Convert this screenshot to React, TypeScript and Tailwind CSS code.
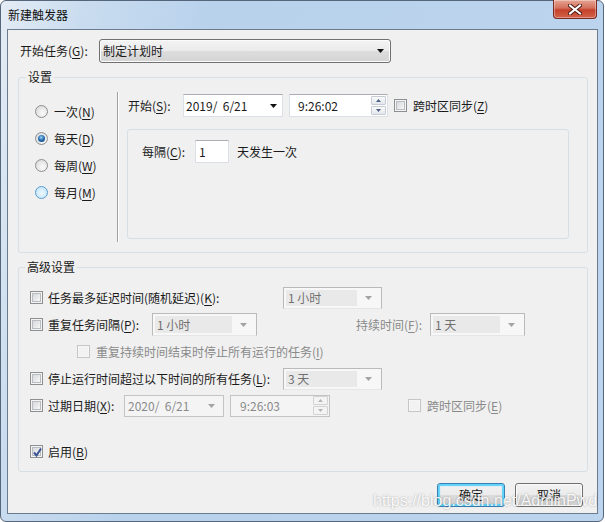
import React from "react";

const U = ({ c }: { c: string }) => (
  <span className="underline underline-offset-[2px] decoration-[1px]">{c}</span>
);

function Tri({ gray = false }: { gray?: boolean }) {
  return (
    <svg width="7" height="4" viewBox="0 0 7 4">
      <path d="M0 0h7L3.5 4z" fill={gray ? "#a3a3a3" : "#111"} />
    </svg>
  );
}

function Check({ checked = false, disabled = false }: { checked?: boolean; disabled?: boolean }) {
  return (
    <span
      className={`relative flex h-[13px] w-[13px] shrink-0 items-center justify-center border ${
        disabled ? "border-[#c6c6c6] bg-[#f6f6f6]" : "border-[#8e8f8f] bg-[#f4f4f4]"
      }`}
    >
      <span
        className={`h-[9px] w-[9px] ${
          disabled
            ? "bg-[#f2f2f2]"
            : "border border-[#b9bcc1] bg-[linear-gradient(135deg,#d6d8dc,#f7f7f7)]"
        }`}
      />
      {checked && (
        <svg className="absolute left-[1px] top-[1px]" width="11" height="11" viewBox="0 0 11 11">
          <path d="M2 5.5 L4.5 8.5 L9 1.5" fill="none" stroke="#3b5596" strokeWidth="2" />
        </svg>
      )}
    </span>
  );
}

function Radio({ on = false, hover = false }: { on?: boolean; hover?: boolean }) {
  return (
    <span
      className={`flex h-[13px] w-[13px] shrink-0 items-center justify-center rounded-full border ${
        hover
          ? "border-[#5b9bd1] bg-[radial-gradient(circle_at_50%_55%,#eef8fe,#b9e1f8)]"
          : "border-[#8e8f8f] bg-[radial-gradient(circle_at_60%_65%,#fbfbfb,#d4d4d4)]"
      }`}
    >
      {on && (
        <span className="h-[7px] w-[7px] rounded-full bg-[radial-gradient(circle_at_45%_35%,#9fd3f3,#2a70b5_45%,#0d3c70)]" />
      )}
    </span>
  );
}

function DCombo({ w, h, text }: { w: string; h: string; text: string }) {
  return (
    <div className={`flex ${w} ${h} shrink-0 border border-[#bababa] border-b-[#e6e6e6] bg-[#f7f7f7] p-[2px]`}>
      <div className="flex flex-1 items-center bg-[#e9e9e9] pl-[2px] text-[#707070]">{text}</div>
      <div className="flex w-[22px] items-center justify-center">
        <Tri gray />
      </div>
    </div>
  );
}

function Spin({ disabled = false }: { disabled?: boolean }) {
  const box = disabled
    ? "border-[#d2d2d2] bg-[#f4f4f4]"
    : "border-[#c7ccd4] bg-[linear-gradient(180deg,#fafafa,#e4e7ec)]";
  const col = disabled ? "#b5b5b5" : "#4d6185";
  return (
    <div className="flex flex-col gap-[1px]">
      <div className={`flex h-[9px] w-[15px] items-center justify-center rounded-[1px] border ${box}`}>
        <svg width="5" height="3" viewBox="0 0 5 3">
          <path d="M0 3h5L2.5 0z" fill={col} />
        </svg>
      </div>
      <div className={`flex h-[9px] w-[15px] items-center justify-center rounded-[1px] border ${box}`}>
        <svg width="5" height="3" viewBox="0 0 5 3">
          <path d="M0 0h5L2.5 3z" fill={col} />
        </svg>
      </div>
    </div>
  );
}

function Row({ children, className = "" }: { children: React.ReactNode; className?: string }) {
  return <div className={`flex h-[27px] items-center ${className}`}>{children}</div>;
}

export default function App() {
  return (
    <div className="relative h-[522px] w-[605px] overflow-hidden bg-white text-[12px] leading-[16px] text-[#1b1b1b] [font-family:'Noto_Sans_CJK_SC','Noto_Sans',sans-serif]">
      <div className="flex h-[522px] w-[604px] flex-col rounded-[6px] border border-[#56667a] bg-[linear-gradient(100deg,#e4ecf5_0%,#c9dcef_12%,#b9d2ec_30%,#bcd4ed_100%)]">
        {/* title bar */}
        <div className="flex h-[28px] shrink-0 items-start justify-between">
          <span className="ml-[7px] mt-[6px] text-[12px] text-[#111]">新建触发器</span>
          <div className="mr-[6px] mt-[-1px] flex h-[19px] w-[44px] items-center justify-center rounded-b-[4px] border border-t-0 border-[#7a2a22] bg-[linear-gradient(180deg,#e8a493_0%,#d3705c_45%,#c4402a_55%,#d4644a_100%)] shadow-[inset_0_0_0_1px_rgba(255,255,255,0.35)]">
            <svg width="14" height="11" viewBox="0 0 14 11">
              <path d="M2 1.5 L12 9.5 M12 1.5 L2 9.5" stroke="#4a1a14" strokeWidth="4" strokeLinecap="square" />
              <path d="M2 1.5 L12 9.5 M12 1.5 L2 9.5" stroke="#fff" strokeWidth="2" strokeLinecap="square" />
            </svg>
          </div>
        </div>

        {/* client area */}
        <div className="ml-[6px] h-[485px] w-[591px] shrink-0 border border-[#6c7c8f] bg-[#f0f0f0] pl-[10px] pr-[9px]">
          {/* start task */}
          <div className="mt-[9px] flex h-[24px] items-center">
            <span className="w-[81px] pl-[2px]">
              开始任务(<U c="G" />):
            </span>
            <div className="flex h-[24px] w-[292px] items-center justify-between rounded-[3px] border border-[#707070] bg-[linear-gradient(180deg,#f3f3f3_0%,#ebebeb_50%,#dddddd_50%,#d4d4d4_100%)] pl-[3px] pr-[6px] shadow-[inset_0_0_0_1px_#fcfcfc]">
              <span>制定计划时</span>
              <Tri />
            </div>
          </div>

          {/* settings group */}
          <fieldset className="mt-[6px] h-[184px] w-[570px] rounded-[3px] border border-[#d5dfe5]">
            <legend className="ml-[7px] px-[2px] leading-[16px]">设置</legend>
            <div className="flex pt-[7px]">
              <div className="flex w-[98px] flex-col pl-[16px] pt-[6px]">
                <Row className="gap-[6px]">
                  <Radio />
                  <span>
                    一次(<U c="N" />)
                  </span>
                </Row>
                <Row className="gap-[6px]">
                  <Radio on />
                  <span>
                    每天(<U c="D" />)
                  </span>
                </Row>
                <Row className="gap-[6px]">
                  <Radio />
                  <span>
                    每周(<U c="W" />)
                  </span>
                </Row>
                <Row className="gap-[6px]">
                  <Radio hover />
                  <span>
                    每月(<U c="M" />)
                  </span>
                </Row>
              </div>
              <div className="h-[150px] w-[2px] border-l border-r border-l-[#a0a0a0] border-r-white" />
              <div className="flex flex-col pl-[9px] pt-[2px]">
                <div className="flex h-[23px] items-center">
                  <span className="w-[55px]">
                    开始(<U c="S" />):
                  </span>
                  <div className="flex h-[23px] w-[100px] items-center justify-between border border-[#dbdfe6] border-t-[#abadb3] bg-white pl-[2px] pr-[5px]">
                    <span>2019/&nbsp;&nbsp;6/21</span>
                    <Tri />
                  </div>
                  <div className="ml-[6px] flex h-[23px] w-[99px] items-center justify-between border border-[#dbdfe6] border-t-[#abadb3] bg-white pl-[8px] pr-[1px]">
                    <span>9:26:02</span>
                    <Spin />
                  </div>
                  <span className="ml-[6px]">
                    <Check />
                  </span>
                  <span className="ml-[6px]">
                    跨时区同步(<U c="Z" />)
                  </span>
                </div>
                <div className="ml-[-1px] mt-[12px] h-[110px] w-[442px] rounded-[3px] border border-[#d5dfe5] pl-[14px] pt-[10px]">
                  <div className="flex h-[23px] items-center">
                    <span className="w-[53px]">
                      每隔(<U c="C" />):
                    </span>
                    <div className="flex h-[23px] w-[34px] items-center border border-[#dbdfe6] border-t-[#abadb3] bg-white pl-[3px]">
                      1
                    </div>
                    <span className="ml-[8px]">天发生一次</span>
                  </div>
                </div>
              </div>
            </div>
          </fieldset>

          {/* advanced group */}
          <fieldset className="mt-[6px] h-[213px] w-[570px] rounded-[3px] border border-[#d5dfe5]">
            <legend className="ml-[6px] px-[2px] leading-[16px]">高级设置</legend>
            <div className="flex flex-col pl-[11px] pt-[9px]">
              <Row>
                <Check />
                <span className="ml-[5px] w-[235px]">
                  任务最多延迟时间(随机延迟)(<U c="K" />):
                </span>
                <DCombo w="w-[99px]" h="h-[22px]" text="1 小时" />
              </Row>
              <Row>
                <Check />
                <span className="ml-[5px] w-[104px]">
                  重复任务间隔(<U c="P" />):
                </span>
                <DCombo w="w-[105px]" h="h-[23px]" text="1 小时" />
                <span className="ml-[99px] w-[74px] text-[#8a8a8a]">
                  持续时间(<U c="F" />):
                </span>
                <DCombo w="w-[95px]" h="h-[23px]" text="1 天" />
              </Row>
              <Row>
                <span className="ml-[47px]">
                  <Check disabled />
                </span>
                <span className="ml-[6px] text-[#8a8a8a]">
                  重复持续时间结束时停止所有运行的任务(<U c="I" />)
                </span>
              </Row>
              <Row>
                <Check />
                <span className="ml-[5px] w-[235px]">
                  停止运行时间超过以下时间的所有任务(<U c="L" />):
                </span>
                <DCombo w="w-[99px]" h="h-[22px]" text="3 天" />
              </Row>
              <Row>
                <Check />
                <span className="ml-[5px] w-[76px]">
                  过期日期(<U c="X" />):
                </span>
                <div className="flex h-[22px] w-[100px] items-center justify-between border border-[#c4c4c4] bg-[#f4f4f4] pl-[3px] pr-[8px] text-[#8a8a8a]">
                  <span>2020/&nbsp;&nbsp;6/21</span>
                  <Tri gray />
                </div>
                <div className="ml-[6px] flex h-[22px] w-[100px] items-center justify-between border border-[#c4c4c4] bg-[#f4f4f4] pl-[9px] pr-[1px] text-[#8a8a8a]">
                  <span>9:26:03</span>
                  <Spin disabled />
                </div>
                <span className="ml-[78px]">
                  <Check disabled />
                </span>
                <span className="ml-[6px] text-[#8a8a8a]">
                  跨时区同步(<U c="E" />)
                </span>
              </Row>
              <Row className="mt-[19px]">
                <Check checked />
                <span className="ml-[5px]">
                  启用(<U c="B" />)
                </span>
              </Row>
            </div>
          </fieldset>

          {/* buttons */}
          <div className="mt-[11px] flex justify-end gap-[10px] pr-[5px]">
            <div className="flex h-[24px] w-[68px] items-center justify-center rounded-[3px] border border-[#3c7fb1] bg-[linear-gradient(180deg,#f2f2f2_0%,#ebebeb_50%,#dddddd_50%,#cfcfcf_100%)] shadow-[inset_0_0_1px_2px_#5fd2fb]">
              确定
            </div>
            <div className="flex h-[24px] w-[68px] items-center justify-center rounded-[3px] border border-[#707070] bg-[linear-gradient(180deg,#f2f2f2_0%,#ebebeb_50%,#dddddd_50%,#cfcfcf_100%)] shadow-[inset_0_0_0_1px_#fbfbfb]">
              取消
            </div>
          </div>
        </div>
      </div>

      {/* watermark */}
      <span className="pointer-events-none absolute left-[373px] top-[492px] text-[16px] leading-[18px] text-white/90 [font-family:'Liberation_Sans',sans-serif] [text-shadow:0_0_2px_rgba(0,0,0,0.35)]">
        https://blog.csdn.net/AdminPwd
      </span>
    </div>
  );
}
